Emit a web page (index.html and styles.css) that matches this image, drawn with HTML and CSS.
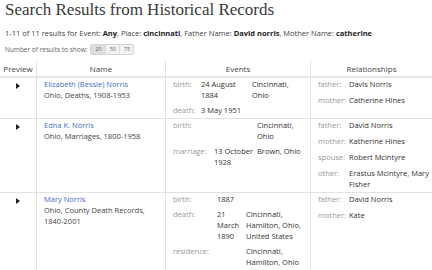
FILE: index.html
```html
<!DOCTYPE html>
<html lang="en">
<head>
  <meta charset="UTF-8">
  <meta name="viewport" content="width=device-width, initial-scale=1.0">
  <title>Search Results from Historical Records</title>
  <link rel="stylesheet" href="styles.css">
</head>
<body>
  <div class="page-head">
    <h1>Search Results from Historical Records</h1>
    <p class="summary">1-11 of 11 results for Event: <b>Any</b>, Place: <b>cincinnati</b>, Father Name: <b>David norris</b>, Mother Name: <b>catherine</b></p>
    <div class="per-page">
      <span>Number of results to show:</span>
      <div class="btn-group">
        <button class="active">20</button><button>50</button><button>75</button>
      </div>
    </div>
  </div>

  <table class="results">
    <thead>
      <tr>
        <th class="col-preview">Preview</th>
        <th class="col-name">Name</th>
        <th class="col-events">Events</th>
        <th class="col-rel">Relationships</th>
      </tr>
    </thead>
    <tbody>
      <tr>
        <td class="preview"><span class="arrow"></span></td>
        <td class="name">
          <a href="#">Elizabeth (Bessie) Norris</a>
          <div>Ohio, Deaths, 1908-1953</div>
        </td>
        <td class="events-cell">
          <div class="events ev-short">
            <span class="label">birth:</span><span>24 August 1884</span><span>Cincinnati, Ohio</span>
            <span class="label">death:</span><span>3 May 1951</span><span></span>
          </div>
        </td>
        <td class="rels-cell">
          <div class="rels">
            <span class="label">father:</span><span>Davis Norris</span>
            <span class="label">mother:</span><span>Catherine Hines</span>
          </div>
        </td>
      </tr>
      <tr>
        <td class="preview"><span class="arrow"></span></td>
        <td class="name">
          <a href="#">Edna K. Norris</a>
          <div>Ohio, Marriages, 1800-1958</div>
        </td>
        <td class="events-cell">
          <div class="events ev-mid">
            <span class="label">birth:</span><span></span><span>Cincinnati, Ohio</span>
            <span class="label">marriage:</span><span>13 October 1928</span><span>Brown, Ohio</span>
          </div>
        </td>
        <td class="rels-cell">
          <div class="rels">
            <span class="label">father:</span><span>David Norris</span>
            <span class="label">mother:</span><span>Katherine Hines</span>
            <span class="label">spouse:</span><span>Robert Mcintyre</span>
            <span class="label">other:</span><span>Erastus Mcintyre, Mary Fisher</span>
          </div>
        </td>
      </tr>
      <tr>
        <td class="preview"><span class="arrow"></span></td>
        <td class="name">
          <a href="#">Mary Norris</a>
          <div>Ohio, County Death Records, 1840-2001</div>
        </td>
        <td class="events-cell">
          <div class="events ev-long">
            <span class="label">birth:</span><span>1887</span><span></span>
            <span class="label">death:</span><span>21 March 1890</span><span>Cincinnati, Hamilton, Ohio, United States</span>
            <span class="label">residence:</span><span></span><span>Cincinnati, Hamilton, Ohio</span>
          </div>
        </td>
        <td class="rels-cell">
          <div class="rels">
            <span class="label">father:</span><span>David Norris</span>
            <span class="label">mother:</span><span>Kate</span>
          </div>
        </td>
      </tr>
    </tbody>
  </table>
</body>
</html>
```

FILE: styles.css
```css
body {
  margin: 0;
  font-family: "Open Sans", Lato, sans-serif;
  font-size: 7.5px;
  line-height: 11px;
  color: #333;
  background-color: white;
}
.page-head {
  padding: 0 5px;
}
h1 {
  margin: 0;
  padding-top: 1px;
  font-family: "Liberation Serif", serif;
  font-weight: normal;
  font-size: 17px;
  line-height: 18px;
  color: #3a3a3a;
}
.summary {
  margin: 9px 0 0;
  line-height: 10px;
  color: #444;
}
.summary b {
  color: #222;
}
.per-page {
  display: flex;
  align-items: center;
  gap: 3px;
  margin-top: 6px;
  font-size: 6.5px;
  color: #666;
}
.btn-group {
  display: flex;
  border: 1px solid #d4d4d4;
  border-radius: 2px;
  background-color: #f2f2f2;
}
.btn-group button {
  font-family: inherit;
  font-size: 5px;
  line-height: 9px;
  padding: 0 3px;
  width: 14px;
  border: none;
  border-left: 1px solid #ddd;
  background: none;
  color: #555;
}
.btn-group button:first-child {
  border-left: none;
}
.btn-group button.active {
  background-color: #dedede;
}
.results {
  width: 100%;
  margin-top: 6px;
  border-collapse: collapse;
  table-layout: fixed;
}
.results th {
  font-weight: normal;
  font-size: 8px;
  color: #444;
  height: 15px;
  padding: 0;
  border-left: 1px solid #e2e2e2;
  border-bottom: 2px solid #e6e6e6;
}
.results th:first-child,
.results td:first-child {
  border-left: none;
}
.col-preview { width: 36px; }
.col-name { width: 128px; }
.col-events { width: 144px; }
.results td {
  vertical-align: top;
  padding: 1px 4px 2px 7px;
  border-left: 1px solid #e2e2e2;
  border-bottom: 1px solid #e2e2e2;
}
.results td.events-cell,
.results td.rels-cell {
  padding-right: 0;
}
.results td.preview {
  text-align: center;
  padding: 3px 0 0;
}
.arrow {
  display: inline-block;
  width: 0;
  height: 0;
  border-top: 3px solid transparent;
  border-bottom: 3px solid transparent;
  border-left: 4px solid #222;
}
.name a {
  color: #3f6fc5;
  text-decoration: none;
}
.name div {
  color: #444;
}
.events {
  display: grid;
  row-gap: 4px;
}
.ev-short { grid-template-columns: 28px 51px 50px; }
.ev-mid { grid-template-columns: 41px 43px 50px; }
.ev-long { grid-template-columns: 44px 29px 1fr; }
.label {
  color: #999;
}
.rels {
  display: grid;
  grid-template-columns: 31px 1fr;
  row-gap: 5px;
}
```
